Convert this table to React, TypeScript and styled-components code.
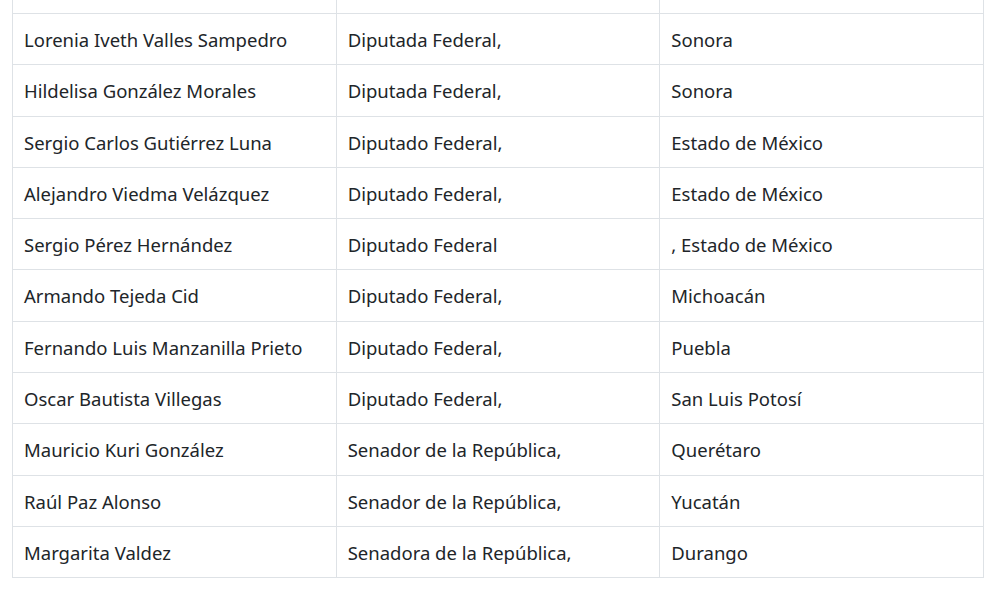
import styled, { createGlobalStyle } from "styled-components";

const GlobalStyle = createGlobalStyle`
  body {
    margin: 0;
    background: #fff;
    font-family: "Noto Sans", "Open Sans", sans-serif;
    color: #212529;
    overflow: hidden;
  }
`;

const Page = styled.div`
  padding: 0 10px 0 12px;
`;

const Table = styled.table`
  width: 972px;
  margin-top: -38.3px;
  border-collapse: collapse;
  table-layout: fixed;
  font-size: 18.5px;
`;

const Row = styled.tr`
  background: #fff;
`;

const Cell = styled.td`
  border: 1px solid #dee2e6;
  padding: 13px 11px 11px;
  line-height: 26.3px;
  white-space: nowrap;
  overflow: hidden;
  vertical-align: top;
`;

const rows: [string, string, string][] = [
  ["Mayra Angélica Enríquez Vanderkam", "Diputada Federal,", "Sonora"],
  ["Lorenia Iveth Valles Sampedro", "Diputada Federal,", "Sonora"],
  ["Hildelisa González Morales", "Diputada Federal,", "Sonora"],
  ["Sergio Carlos Gutiérrez Luna", "Diputado Federal,", "Estado de México"],
  ["Alejandro Viedma Velázquez", "Diputado Federal,", "Estado de México"],
  ["Sergio Pérez Hernández", "Diputado Federal", ", Estado de México"],
  ["Armando Tejeda Cid", "Diputado Federal,", "Michoacán"],
  ["Fernando Luis Manzanilla Prieto", "Diputado Federal,", "Puebla"],
  ["Oscar Bautista Villegas", "Diputado Federal,", "San Luis Potosí"],
  ["Mauricio Kuri González", "Senador de la República,", "Querétaro"],
  ["Raúl Paz Alonso", "Senador de la República,", "Yucatán"],
  ["Margarita Valdez", "Senadora de la República,", "Durango"],
];

const App = () => {
  return (
    <Page>
      <GlobalStyle />
      <Table>
        <tbody>
          {rows.map(([name, cargo, estado]) => (
            <Row key={name}>
              <Cell>{name}</Cell>
              <Cell>{cargo}</Cell>
              <Cell>{estado}</Cell>
            </Row>
          ))}
        </tbody>
      </Table>
    </Page>
  );
};

export default App;
